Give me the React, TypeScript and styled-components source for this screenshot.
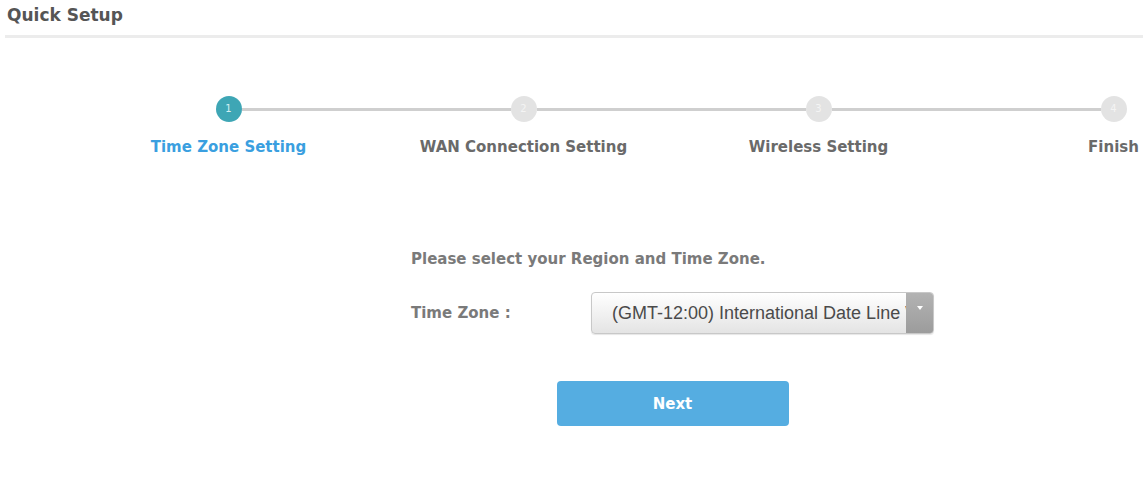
import styled, { createGlobalStyle } from "styled-components";

const GlobalStyle = createGlobalStyle`
  html, body {
    margin: 0;
    padding: 0;
    background: #ffffff;
    overflow: hidden;
  }
  body {
    font-family: "DejaVu Sans", "Liberation Sans", Arial, sans-serif;
  }
`;

const steps = [
  "Time Zone Setting",
  "WAN Connection Setting",
  "Wireless Setting",
  "Finish",
];

export default function App() {
  const current = 0;

  return (
    <Page>
      <GlobalStyle />
      <Header>
        <h1>Quick Setup</h1>
      </Header>

      <Steps>
        {steps.map((label, i) => (
          <Step key={label} $last={i === steps.length - 1}>
            <Dot $active={i === current}>{i + 1}</Dot>
            <StepLabel $active={i === current}>{label}</StepLabel>
          </Step>
        ))}
      </Steps>

      <Form>
        <Prompt>Please select your Region and Time Zone.</Prompt>
        <FieldRow>
          <FieldLabel>Time Zone :</FieldLabel>
          <Select>
            <SelectText>(GMT-12:00) International Date Line West</SelectText>
            <SelectArrow>
              <svg width="6" height="4" viewBox="0 0 6 4">
                <path d="M0 0h6L3 4z" fill="#ffffff" />
              </svg>
            </SelectArrow>
          </Select>
        </FieldRow>
        <ButtonRow>
          <NextButton>Next</NextButton>
        </ButtonRow>
      </Form>
    </Page>
  );
}

const Page = styled.div`
  width: 1146px;
  height: 493px;
  overflow: hidden;
  background: #fff;
`;

const Header = styled.div`
  margin: 0 3px 0 5px;
  padding: 6px 0 11px 2px;
  border-bottom: 3px solid #ececec;

  > h1 {
    margin: 0;
    font-size: 17px;
    font-weight: 700;
    color: #555555;
    line-height: 18px;
  }
`;

const Steps = styled.div`
  display: grid;
  grid-template-columns: repeat(4, 295px);
  margin-left: 81px;
  margin-top: 58px;
  width: 1180px;
`;

const Step = styled.div<{ $last: boolean }>`
  position: relative;
  display: flex;
  flex-direction: column;
  align-items: center;

  &::after {
    content: "";
    display: ${(p) => (p.$last ? "none" : "block")};
    position: absolute;
    top: 12px;
    left: calc(50% + 13px);
    width: calc(100% - 26px);
    height: 3px;
    background: #cfcfcf;
  }
`;

const Dot = styled.div<{ $active: boolean }>`
  width: 26px;
  height: 26px;
  border-radius: 50%;
  background: ${(p) => (p.$active ? "#3ea6b5" : "#e3e3e3")};
  color: ${(p) => (p.$active ? "#d6f0f3" : "#f4f4f4")};
  font-size: 10px;
  line-height: 26px;
  text-align: center;
`;

const StepLabel = styled.div<{ $active: boolean }>`
  margin-top: 15px;
  font-size: 15px;
  line-height: 20px;
  font-weight: 700;
  white-space: nowrap;
  color: ${(p) => (p.$active ? "#3a9fe0" : "#6a6a6a")};
`;

const Form = styled.div`
  width: 523px;
  margin: 92px 0 0 411px;
`;

const Prompt = styled.div`
  font-size: 15px;
  font-weight: 700;
  color: #7a7a7a;
  line-height: 20px;
`;

const FieldRow = styled.div`
  display: flex;
  align-items: center;
  margin-top: 23px;
`;

const FieldLabel = styled.div`
  width: 180px;
  font-size: 15px;
  font-weight: 700;
  color: #7a7a7a;
`;

const Select = styled.div`
  display: flex;
  width: 343px;
  height: 42px;
  box-sizing: border-box;
  border: 1px solid #c8c8c8;
  border-radius: 4px;
  overflow: hidden;
  background: linear-gradient(#ffffff, #e4e4e4);
  box-shadow: 0 1px 1px rgba(0, 0, 0, 0.1);
`;

const SelectText = styled.div`
  flex: 1;
  padding-left: 20px;
  font-family: "Liberation Sans", Arial, sans-serif;
  font-size: 18px;
  line-height: 40px;
  color: #4a4a4a;
  white-space: nowrap;
  overflow: hidden;
`;

const SelectArrow = styled.div`
  width: 27px;
  display: flex;
  align-items: center;
  justify-content: center;
  padding-bottom: 10px;
  box-sizing: border-box;
  background: linear-gradient(#b3b3b3, #9c9c9c);
`;

const ButtonRow = styled.div`
  display: flex;
  justify-content: center;
  margin-top: 47px;
`;

const NextButton = styled.button`
  width: 232px;
  height: 45px;
  border: none;
  border-radius: 4px;
  background: #55ade1;
  color: #ffffff;
  font-family: "DejaVu Sans", "Liberation Sans", Arial, sans-serif;
  font-size: 15px;
  font-weight: 700;
`;
